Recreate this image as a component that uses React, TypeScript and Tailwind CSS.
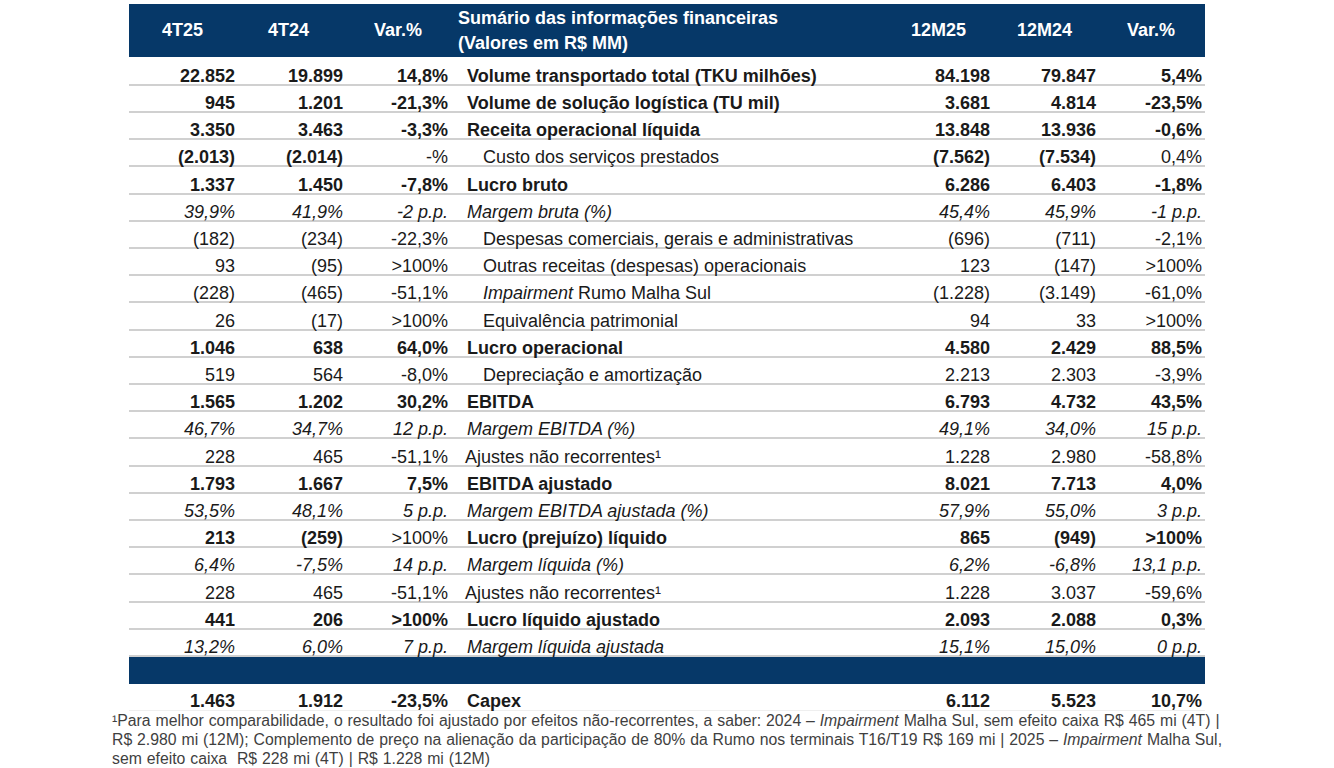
import React from "react";

type Kind = "b" | "r" | "i";

type Row = {
  cells: string[];
  label: React.ReactNode;
  kind: Kind;
  indent?: boolean;
  tight?: boolean;
  // which number cells are bold (overrides kind), index 0..5
  boldMask?: boolean[];
};

const rows: Row[] = [
  { cells: ["22.852", "19.899", "14,8%", "84.198", "79.847", "5,4%"], label: "Volume transportado total (TKU milhões)", kind: "b" },
  { cells: ["945", "1.201", "-21,3%", "3.681", "4.814", "-23,5%"], label: "Volume de solução logística (TU mil)", kind: "b" },
  { cells: ["3.350", "3.463", "-3,3%", "13.848", "13.936", "-0,6%"], label: "Receita operacional líquida", kind: "b" },
  {
    cells: ["(2.013)", "(2.014)", "-%", "(7.562)", "(7.534)", "0,4%"],
    label: "Custo dos serviços prestados",
    kind: "r",
    indent: true,
    boldMask: [true, true, false, true, true, false],
  },
  { cells: ["1.337", "1.450", "-7,8%", "6.286", "6.403", "-1,8%"], label: "Lucro bruto", kind: "b" },
  { cells: ["39,9%", "41,9%", "-2 p.p.", "45,4%", "45,9%", "-1 p.p."], label: "Margem bruta (%)", kind: "i" },
  { cells: ["(182)", "(234)", "-22,3%", "(696)", "(711)", "-2,1%"], label: "Despesas comerciais, gerais e administrativas", kind: "r", indent: true },
  { cells: ["93", "(95)", ">100%", "123", "(147)", ">100%"], label: "Outras receitas (despesas) operacionais", kind: "r", indent: true },
  {
    cells: ["(228)", "(465)", "-51,1%", "(1.228)", "(3.149)", "-61,0%"],
    label: (
      <span>
        <i>Impairment</i> Rumo Malha Sul
      </span>
    ),
    kind: "r",
    indent: true,
  },
  { cells: ["26", "(17)", ">100%", "94", "33", ">100%"], label: "Equivalência patrimonial", kind: "r", indent: true },
  { cells: ["1.046", "638", "64,0%", "4.580", "2.429", "88,5%"], label: "Lucro operacional", kind: "b" },
  { cells: ["519", "564", "-8,0%", "2.213", "2.303", "-3,9%"], label: "Depreciação e amortização", kind: "r", indent: true },
  { cells: ["1.565", "1.202", "30,2%", "6.793", "4.732", "43,5%"], label: "EBITDA", kind: "b" },
  { cells: ["46,7%", "34,7%", "12 p.p.", "49,1%", "34,0%", "15 p.p."], label: "Margem EBITDA (%)", kind: "i" },
  { cells: ["228", "465", "-51,1%", "1.228", "2.980", "-58,8%"], label: "Ajustes não recorrentes¹", kind: "r", tight: true },
  { cells: ["1.793", "1.667", "7,5%", "8.021", "7.713", "4,0%"], label: "EBITDA ajustado", kind: "b" },
  { cells: ["53,5%", "48,1%", "5 p.p.", "57,9%", "55,0%", "3 p.p."], label: "Margem EBITDA ajustada (%)", kind: "i" },
  {
    cells: ["213", "(259)", ">100%", "865", "(949)", ">100%"],
    label: "Lucro (prejuízo) líquido",
    kind: "b",
    boldMask: [true, true, false, true, true, true],
  },
  { cells: ["6,4%", "-7,5%", "14 p.p.", "6,2%", "-6,8%", "13,1 p.p."], label: "Margem líquida (%)", kind: "i" },
  { cells: ["228", "465", "-51,1%", "1.228", "3.037", "-59,6%"], label: "Ajustes não recorrentes¹", kind: "r", tight: true },
  { cells: ["441", "206", ">100%", "2.093", "2.088", "0,3%"], label: "Lucro líquido ajustado", kind: "b" },
  { cells: ["13,2%", "6,0%", "7 p.p.", "15,1%", "15,0%", "0 p.p."], label: "Margem líquida ajustada", kind: "i" },
];

const grid = "grid grid-cols-[116px_108px_105px_436px_106px_106px_99px]";
const numPad = ["pr-[10px]", "pr-[10px]", "pr-[10px]", "pr-[10px]", "pr-[10px]", "pr-[3px]"];

const kindClass = (k: Kind, bold?: boolean) => {
  if (bold !== undefined) return bold ? "font-bold" : "font-normal";
  if (k === "b") return "font-bold";
  if (k === "i") return "italic";
  return "font-normal";
};

const NumCell = ({ v, idx, cls }: { v: string; idx: number; cls: string }) => (
  <div className={`flex items-end justify-end whitespace-nowrap ${numPad[idx]} ${cls}`}>{v}</div>
);

const DataRow = ({ row, tall }: { row: Row; tall: boolean }) => {
  const c = (i: number) => kindClass(row.kind, row.boldMask ? row.boldMask[i] : undefined);
  const labelPad = row.indent ? "pl-[25px]" : row.tight ? "pl-[7px]" : "pl-[9px]";
  return (
    <div className={`${grid} ${tall ? "h-[28px]" : "h-[27px]"} border-b-2 border-[#d0d0d0] leading-[15px]`}>
      <NumCell v={row.cells[0]} idx={0} cls={c(0)} />
      <NumCell v={row.cells[1]} idx={1} cls={c(1)} />
      <NumCell v={row.cells[2]} idx={2} cls={c(2)} />
      <div className={`flex items-end whitespace-nowrap ${labelPad} ${kindClass(row.kind)}`}>{row.label}</div>
      <NumCell v={row.cells[3]} idx={3} cls={c(3)} />
      <NumCell v={row.cells[4]} idx={4} cls={c(4)} />
      <NumCell v={row.cells[5]} idx={5} cls={c(5)} />
    </div>
  );
};

export default function App() {
  return (
    <div className="min-h-[768px] w-full bg-white font-['Liberation_Sans',Arial,sans-serif] text-[18px] text-[#1a1a1a]">
      <div className="mx-auto w-[1076px] pt-[4px]">
        {/* header */}
        <div className={`${grid} h-[53px] bg-[#063868] font-bold text-white`}>
          <div className="flex items-center pl-[33px]">4T25</div>
          <div className="flex items-center pl-[23px]">4T24</div>
          <div className="flex items-center pl-[21px]">Var.%</div>
          <div className="flex flex-col justify-center leading-[25px]">
            <span>Sumário das informações financeiras</span>
            <span>(Valores em R$ MM)</span>
          </div>
          <div className="flex items-center pl-[17px]">12M25</div>
          <div className="flex items-center pl-[17px]">12M24</div>
          <div className="flex items-center pl-[21px]">Var.%</div>
        </div>

        <div className="mt-[2px]">
          {rows.map((r, i) => (
            <DataRow key={i} row={r} tall={i % 5 === 4} />
          ))}
        </div>

        <div className="h-[27px] bg-[#063868]" />

        {/* capex */}
        <div className={`${grid} h-[27px] border-b border-[#efefef] font-bold leading-[18px]`}>
          <NumCell v="1.463" idx={0} cls="" />
          <NumCell v="1.912" idx={1} cls="" />
          <NumCell v="-23,5%" idx={2} cls="" />
          <div className="flex items-end pl-[9px]">Capex</div>
          <NumCell v="6.112" idx={3} cls="" />
          <NumCell v="5.523" idx={4} cls="" />
          <NumCell v="10,7%" idx={5} cls="" />
        </div>
      </div>

      {/* footnote */}
      <div className="mx-auto w-[1114px] whitespace-nowrap pl-[2px] text-[15.8px] leading-[19px] text-[#3f3f3f] [word-spacing:0.5px]">
        ¹Para melhor comparabilidade, o resultado foi ajustado por efeitos não-recorrentes, a saber: 2024 – <i>Impairment</i> Malha Sul, sem efeito caixa R$ 465 mi (4T) |
        <br />
        R$ 2.980 mi (12M); Complemento de preço na alienação da participação de 80% da Rumo nos terminais T16/T19 R$ 169 mi | 2025 – <i>Impairment</i> Malha Sul,
        <br />
        sem efeito caixa&nbsp; R$ 228 mi (4T) | R$ 1.228 mi (12M)
      </div>
    </div>
  );
}
